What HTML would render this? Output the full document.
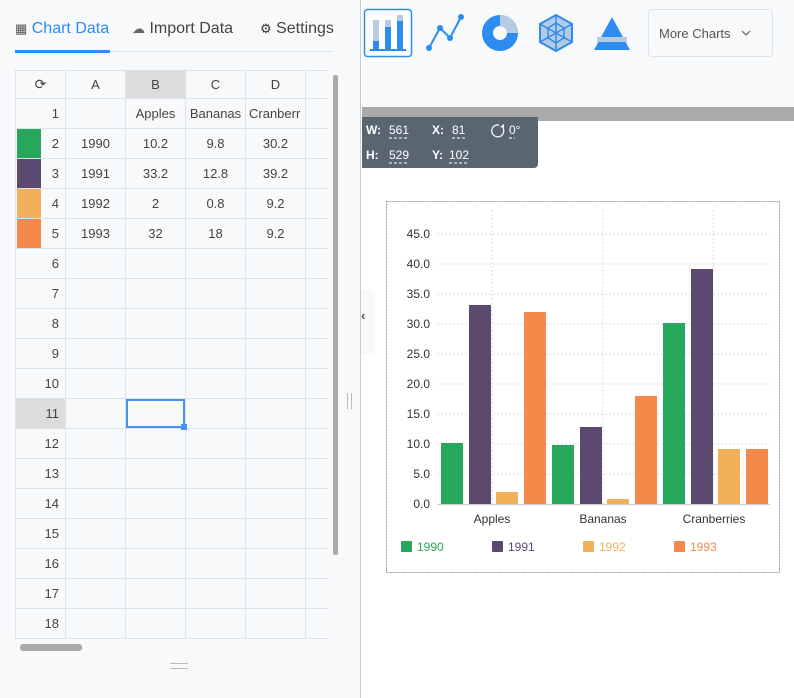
<!DOCTYPE html>
<html><head><meta charset="utf-8"><style>
*{margin:0;padding:0;box-sizing:border-box}
body{width:794px;height:698px;overflow:hidden;background:#fff;font-family:"Liberation Sans",sans-serif;position:relative}
.left{position:absolute;left:0;top:0;width:361px;height:698px;background:#f8f9fb;border-right:1px solid #c9ccd1}
.tab{position:absolute;top:20px;font-size:16px;color:#444}
table{position:absolute;left:0;top:0;border-collapse:collapse;table-layout:fixed;width:313px}
td{border:1px solid #dde3ea;height:30px;font-size:13px;color:#444;text-align:center;padding:0;white-space:nowrap;overflow:hidden}
tr.h td{height:28px}
td.rn{text-align:right;padding-right:6px;position:relative}
.sw{position:absolute;left:1px;top:0;bottom:0;width:24px}
.right{position:absolute;left:362px;top:0;right:0}
</style></head><body>
<div class="left">
 <div class="tab" style="left:15px;color:#2d8cf0"><span style="font-size:13px;color:#555">&#9638;</span> Chart Data</div>
 <div class="tab" style="left:132px"><span style="font-size:13px;color:#666">☁</span> Import Data</div>
 <div class="tab" style="left:260px"><span style="font-size:13px;color:#333">⚙</span> Settings</div>
 <div style="position:absolute;left:15px;top:51px;width:319px;height:1px;background:#dde3ea"></div>
 <div style="position:absolute;left:15px;top:50px;width:95px;height:3px;background:#2d8cf0"></div>
 <div style="position:absolute;left:15px;top:70px;width:313px;height:570px;overflow:hidden">
 <table>
  <colgroup><col style="width:50px"><col style="width:60px"><col style="width:60px"><col style="width:60px"><col style="width:60px"><col style="width:23px"></colgroup>
  <tr class="h"><td style="font-size:14px">⟳</td><td>A</td><td style="background:#dcdcdc">B</td><td>C</td><td>D</td><td></td></tr>
  <tr><td class="rn">1</td><td></td><td>Apples</td><td>Bananas</td><td style="text-align:left;padding-left:3px">Cranberr</td><td></td></tr>
  <tr><td class="rn"><div class="sw" style="background:#27a75b"></div>2</td><td>1990</td><td>10.2</td><td>9.8</td><td>30.2</td><td></td></tr>
  <tr><td class="rn"><div class="sw" style="background:#5b496f"></div>3</td><td>1991</td><td>33.2</td><td>12.8</td><td>39.2</td><td></td></tr>
  <tr><td class="rn"><div class="sw" style="background:#f3b05a"></div>4</td><td>1992</td><td>2</td><td>0.8</td><td>9.2</td><td></td></tr>
  <tr><td class="rn"><div class="sw" style="background:#f3894a"></div>5</td><td>1993</td><td>32</td><td>18</td><td>9.2</td><td></td></tr>
  <tr><td class="rn">6</td><td></td><td></td><td></td><td></td><td></td></tr>
  <tr><td class="rn">7</td><td></td><td></td><td></td><td></td><td></td></tr>
  <tr><td class="rn">8</td><td></td><td></td><td></td><td></td><td></td></tr>
  <tr><td class="rn">9</td><td></td><td></td><td></td><td></td><td></td></tr>
  <tr><td class="rn">10</td><td></td><td></td><td></td><td></td><td></td></tr>
  <tr><td class="rn" style="background:#dcdcdc">11</td><td></td><td></td><td></td><td></td><td></td></tr>
  <tr><td class="rn">12</td><td></td><td></td><td></td><td></td><td></td></tr>
  <tr><td class="rn">13</td><td></td><td></td><td></td><td></td><td></td></tr>
  <tr><td class="rn">14</td><td></td><td></td><td></td><td></td><td></td></tr>
  <tr><td class="rn">15</td><td></td><td></td><td></td><td></td><td></td></tr>
  <tr><td class="rn">16</td><td></td><td></td><td></td><td></td><td></td></tr>
  <tr><td class="rn">17</td><td></td><td></td><td></td><td></td><td></td></tr>
  <tr><td class="rn">18</td><td></td><td></td><td></td><td></td><td></td></tr>
 </table>
 </div>
 <div style="position:absolute;left:126px;top:399px;width:59px;height:29px;border:2px solid #4a90f0"></div>
 <div style="position:absolute;left:181px;top:424px;width:6px;height:6px;background:#4a90f0"></div>
 <div style="position:absolute;left:333px;top:75px;width:5px;height:480px;background:#aaa;border-radius:2px"></div>
 <div style="position:absolute;left:20px;top:644px;width:62px;height:7px;background:#aaa;border-radius:3px"></div>
 <div style="position:absolute;left:170px;top:663px;width:18px;height:1px;background:#bbb"></div>
 <div style="position:absolute;left:170px;top:668px;width:18px;height:1px;background:#bbb"></div>
 <div style="position:absolute;left:347px;top:393px;width:1px;height:16px;background:#bbb"></div>
 <div style="position:absolute;left:351px;top:393px;width:1px;height:16px;background:#bbb"></div>
</div>
<div style="position:absolute;left:361px;top:290px;width:14px;height:64px;background:#f8f9fb;border-radius:0 6px 6px 0"></div>
<div style="position:absolute;left:361px;top:308px;font-size:13px;color:#555;font-weight:bold">‹</div>
<div class="right" style="height:107px;background:#f8f9fb"></div>
<svg style="position:absolute;left:0;top:0" width="794" height="698">
 <rect x="364.5" y="9.5" width="47" height="47" rx="3" fill="#fff" stroke="#2d8cf0" stroke-width="1.5"/>
 <rect x="373" y="20" width="6" height="30" fill="#b6cbe3"/><rect x="373" y="41" width="6" height="9" fill="#2d8cf0"/>
 <rect x="385" y="20" width="6" height="30" fill="#b6cbe3"/><rect x="385" y="27" width="6" height="23" fill="#2d8cf0"/>
 <rect x="397" y="15" width="6" height="35" fill="#b6cbe3"/><rect x="397" y="21" width="6" height="29" fill="#2d8cf0"/>
 <rect x="370" y="49" width="36" height="2" fill="#2d8cf0"/>
 <polyline points="429,48 440,28 450,38 461,17" fill="none" stroke="#2d8cf0" stroke-width="2"/>
 <g fill="#2d8cf0"><circle cx="429" cy="48" r="3"/><circle cx="440" cy="28" r="3"/><circle cx="450" cy="38" r="3"/><circle cx="461" cy="17" r="3"/></g>
 <circle cx="500" cy="33" r="12.5" fill="none" stroke="#2d8cf0" stroke-width="11"/>
 <path d="M500 20.5 A12.5 12.5 0 0 1 512.5 33" fill="none" stroke="#b6cbe3" stroke-width="11"/>
 <polygon points="556,15 572,24 572,42 556,51 540,42 540,24" fill="#b6cbe3" stroke="#2d8cf0" stroke-width="2"/>
 <polygon points="556,23 564,28 564,38 556,43 548,38 548,28" fill="none" stroke="#2d8cf0" stroke-width="1.5"/>
 <path d="M556 15V51M540 24L572 42M572 24L540 42" stroke="#2d8cf0" stroke-width="1.5"/>
 <polygon points="612,17 630,50 594,50" fill="#2d8cf0"/>
 <rect x="597" y="37" width="30" height="5" fill="#b6cbe3"/>
 <rect x="648.5" y="9.5" width="124" height="47" rx="3" fill="#f8f9fb" stroke="#dde3ea"/>
 <text x="659" y="38" font-size="13" fill="#555" font-family="Liberation Sans">More Charts</text>
 <path d="M742 31l4 4 4-4" fill="none" stroke="#666" stroke-width="1.2"/>
 <rect x="362" y="107" width="432" height="14" fill="#aaa"/>
 <path d="M362 117H538V164a4 4 0 0 1-4 4H362Z" fill="#5a6572"/>
 <g font-family="Liberation Sans" font-size="12" fill="#fff" font-weight="bold">
  <text x="366" y="134">W:</text><text x="389" y="134" font-weight="normal">561</text>
  <text x="432" y="134">X:</text><text x="452" y="134" font-weight="normal">81</text>
  <text x="509" y="134" font-weight="normal">0°</text>
  <text x="366" y="159">H:</text><text x="389" y="159" font-weight="normal">529</text>
  <text x="432" y="159">Y:</text><text x="449" y="159" font-weight="normal">102</text>
 </g>
 <path d="M389 138h20M389 163h20M452 138h13M449 163h20M509 138h6" stroke="#fff" stroke-dasharray="3 2"/>
 <path d="M499 125a6 6 0 1 0 4 3" fill="none" stroke="#fff" stroke-width="1.2"/><path d="M500 127l4 1 0-4z" fill="#fff"/>
 <rect x="386.5" y="201.5" width="393" height="371" fill="none" stroke="#999" stroke-dasharray="2 1"/>
 <g stroke="#ddd" stroke-dasharray="2 2">
  <path d="M437 234H770M437 264H770M437 294H770M437 324H770M437 354H770M437 384H770M437 414H770M437 444H770M437 474H770"/>
  <path d="M492 210V504M603 210V504M713 210V504"/>
 </g>
 <path d="M437 504.5H770" stroke="#ccc"/>
 <g font-family="Liberation Sans" font-size="12" fill="#333" text-anchor="end">
  <text x="430" y="238">45.0</text><text x="430" y="268">40.0</text><text x="430" y="298">35.0</text><text x="430" y="328">30.0</text><text x="430" y="358">25.0</text><text x="430" y="388">20.0</text><text x="430" y="418">15.0</text><text x="430" y="448">10.0</text><text x="430" y="478">5.0</text><text x="430" y="508">0.0</text>
 </g>
 <g font-family="Liberation Sans" font-size="12" fill="#333" text-anchor="middle">
  <text x="492" y="523">Apples</text><text x="603" y="523">Bananas</text><text x="714" y="523">Cranberries</text>
 </g>
 <g>
  <rect x="441" y="443" width="22" height="61" fill="#27a75b"/><rect x="469" y="305" width="22" height="199" fill="#5b496f"/><rect x="496" y="492" width="22" height="12" fill="#f3b05a"/><rect x="524" y="312" width="22" height="192" fill="#f3894a"/>
  <rect x="552" y="445" width="22" height="59" fill="#27a75b"/><rect x="580" y="427" width="22" height="77" fill="#5b496f"/><rect x="607" y="499" width="22" height="5" fill="#f3b05a"/><rect x="635" y="396" width="22" height="108" fill="#f3894a"/>
  <rect x="663" y="323" width="22" height="181" fill="#27a75b"/><rect x="691" y="269" width="22" height="235" fill="#5b496f"/><rect x="718" y="449" width="22" height="55" fill="#f3b05a"/><rect x="746" y="449" width="22" height="55" fill="#f3894a"/>
 </g>
 <g font-family="Liberation Sans" font-size="12">
  <rect x="401" y="541" width="11" height="11" rx="1" fill="#27a75b"/><text x="417" y="551" fill="#27a75b">1990</text>
  <rect x="492" y="541" width="11" height="11" rx="1" fill="#5b496f"/><text x="508" y="551" fill="#5b496f">1991</text>
  <rect x="583" y="541" width="11" height="11" rx="1" fill="#f3b05a"/><text x="599" y="551" fill="#f3b05a">1992</text>
  <rect x="674" y="541" width="11" height="11" rx="1" fill="#f3894a"/><text x="690" y="551" fill="#f3894a">1993</text>
 </g>
</svg>
</body></html>
